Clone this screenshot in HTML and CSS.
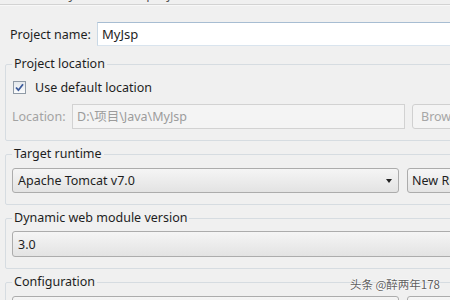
FILE: index.html
```html
<!DOCTYPE html>
<html lang="en">
<head>
    <meta charset="UTF-8">
    <title>Dynamic Web Project</title>
    <link rel="stylesheet" href="styles.css">
</head>
<body>
    <div class="page">
        <!-- Wizard header, mostly scrolled out of view -->
        <div class="head">
            <span class="head-title">Create a Dynamic Web project</span>
        </div>

        <div class="name-row">
            <label class="name-label">Project name:</label>
            <div class="field field-focus">MyJsp</div>
        </div>

        <fieldset class="group group-location">
            <legend>Project location</legend>
            <div class="check-row">
                <span class="checkbox">
                    <svg width="11" height="11" viewBox="0 0 11 11">
                        <path d="M2 5.5 L4.4 8.2 L9 2.2" fill="none" stroke="#3b5a9a" stroke-width="1.8"/>
                    </svg>
                </span>
                <span>Use default location</span>
            </div>
            <div class="control-row loc-row">
                <span class="loc-label">Location:</span>
                <div class="field field-disabled">D:\项目\Java\MyJsp</div>
                <button class="btn btn-disabled">Browse...</button>
            </div>
        </fieldset>

        <fieldset class="group">
            <legend>Target runtime</legend>
            <div class="control-row">
                <div class="combo">
                    <span>Apache Tomcat v7.0</span>
                    <span class="arrow"></span>
                </div>
                <button class="btn btn-wide">New Runtime...</button>
            </div>
        </fieldset>

        <fieldset class="group">
            <legend>Dynamic web module version</legend>
            <div class="combo combo-full">
                <span>3.0</span>
                <span class="arrow"></span>
            </div>
        </fieldset>

        <fieldset class="group">
            <legend>Configuration</legend>
            <div class="control-row">
                <div class="combo">
                    <span>Default Configuration for Apache Tomcat v7.0</span>
                    <span class="arrow"></span>
                </div>
                <button class="btn btn-wide">Modify...</button>
            </div>
        </fieldset>
    </div>

    <div class="watermark">头条 @醉两年178</div>
</body>
</html>
```

FILE: styles.css
```css
body {
    margin: 0;
    background: #f0f0f0;
    font-family: "Noto Sans", "Noto Sans CJK SC", sans-serif;
    font-size: 12.5px;
    color: #1e1e1e;
    overflow: hidden;
}
.page {
    width: 502px;
}
.head {
    height: 4px;
    overflow: hidden;
    border-bottom: 1px solid #d3d3d3;
    box-shadow: 0 1px 0 #f8f8f8;
}
.head-title {
    display: block;
    margin: -13px 0 0 5px;
    line-height: 14px;
    font-size: 13px;
    color: #555;
}
.name-row {
    display: flex;
    align-items: center;
    margin: 17px 0 0 10px;
}
.name-label {
    width: 87px;
}
.field {
    flex: 1;
    height: 24px;
    box-sizing: border-box;
    padding: 0 4px;
    line-height: 22px;
    background: #fff;
    border: 1px solid #c8d4df;
    white-space: nowrap;
}
.field-focus {
    border-color: #a7bdd2 #c9d8e5 #d9e4ee;
    font-size: 13px;
}
.field-disabled {
    height: 25px;
    line-height: 23px;
    background: #f4f4f4;
    border-color: #d2d2d2;
    color: #9c9c9c;
}
.group {
    margin: 10px 5px 0;
    padding: 3px 6px 11px;
    border: 1px solid #d6dce1;
    border-radius: 2px;
}
.group + .group {
    margin-top: 5px;
}
legend {
    padding: 0 2px;
    line-height: 16px;
}
.check-row {
    display: flex;
    align-items: center;
    gap: 9px;
    height: 19px;
    margin-top: 3px;
    padding-left: 1px;
}
.checkbox {
    width: 13px;
    height: 13px;
    box-sizing: border-box;
    border: 1px solid #8f9aa6;
    background: linear-gradient(#e4e8ec, #fafbfc);
    display: flex;
    align-items: center;
    justify-content: center;
}
.control-row {
    display: flex;
    gap: 8px;
    margin-top: 3px;
}
.loc-row {
    margin-top: 7px;
    align-items: center;
    gap: 7px;
}
.loc-label {
    width: 53px;
    color: #a3a3a3;
}
.btn {
    width: 78px;
    height: 25px;
    padding: 0 4px;
    font: inherit;
    text-align: left;
    color: #1e1e1e;
    border: 1px solid #acacac;
    border-radius: 3px;
    background: linear-gradient(#f6f6f6, #e4e4e4);
    white-space: nowrap;
    overflow: hidden;
}
.btn-disabled {
    color: #a6a6a6;
    border-color: #d0d0d0;
    background: #f4f4f4;
    padding-left: 8px;
}
.btn-wide {
    width: 83px;
}
.combo {
    flex: 1;
    height: 25px;
    box-sizing: border-box;
    padding: 0 6px 0 5px;
    display: flex;
    align-items: center;
    justify-content: space-between;
    border: 1px solid #acacac;
    border-radius: 3px;
    background: linear-gradient(#f5f5f5, #e3e3e3);
    white-space: nowrap;
    overflow: hidden;
}
.combo-full {
    height: 26px;
    margin-top: 2px;
}
.arrow {
    width: 0;
    height: 0;
    border-left: 3.5px solid transparent;
    border-right: 3.5px solid transparent;
    border-top: 4px solid #222;
}
.watermark {
    position: absolute;
    right: 10px;
    bottom: 8px;
    font-family: "Noto Sans CJK SC", sans-serif;
    font-size: 11.5px;
    color: #5e5e5e;
    text-shadow: 0 0 2px #fff, 0 0 2px #fff, 0 0 1px #fff;
}
```
